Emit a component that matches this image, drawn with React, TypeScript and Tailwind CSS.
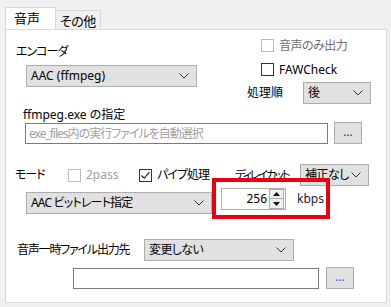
import React from 'react';

// Windows-style form controls
function Chevron() {
  return (
    <svg width="10" height="6" viewBox="0 0 10 6" className="shrink-0">
      <path d="M0.5 0.5 L5 5 L9.5 0.5" fill="none" stroke="#333" strokeWidth="1" />
    </svg>
  );
}

function Combo({ text, className }: { text: string; className: string }) {
  return (
    <div
      className={`flex items-center justify-between bg-[#e1e1e1] border border-[#adadad] pl-[4px] pr-[7px] ${className}`}
    >
      <span className="whitespace-nowrap">{text}</span>
      <Chevron />
    </div>
  );
}

function Check({
  label,
  checked = false,
  disabled = false,
  labelClass = 'text-black',
  className = '',
}: {
  label: string;
  checked?: boolean;
  disabled?: boolean;
  labelClass?: string;
  className?: string;
}) {
  return (
    <div className={`flex items-center h-[13px] ${className}`}>
      <div
        className={`w-[13px] h-[13px] bg-white border flex items-center justify-center shrink-0 ${
          disabled ? 'border-[#bcbcbc]' : 'border-[#333333]'
        }`}
      >
        {checked && (
          <svg width="11" height="11" viewBox="0 0 11 11">
            <path d="M1.5 5.5 L4.2 8.2 L9.5 2.2" fill="none" stroke="#222" strokeWidth="1.2" />
          </svg>
        )}
      </div>
      <span className={`ml-[5px] whitespace-nowrap ${labelClass}`}>{label}</span>
    </div>
  );
}

function BrowseButton({ dotClass, className }: { dotClass: string; className: string }) {
  return (
    <div
      className={`w-[28px] h-[22px] bg-[#e1e1e1] border border-[#adadad] flex items-center justify-center ${className}`}
    >
      <span className={`leading-none pb-[2px] ${dotClass}`}>...</span>
    </div>
  );
}

function Spin() {
  return (
    <div className="flex flex-col w-[15px] h-[20px] mr-[1px]">
      <div className="h-[10px] border border-[#adadad] bg-[#f0f0f0] flex items-center justify-center">
        <svg width="7" height="4" viewBox="0 0 7 4">
          <path d="M0 4 L3.5 0 L7 4 Z" fill="#111" />
        </svg>
      </div>
      <div className="h-[10px] border border-t-0 border-[#adadad] bg-[#f0f0f0] flex items-center justify-center">
        <svg width="7" height="4" viewBox="0 0 7 4">
          <path d="M0 0 L3.5 4 L7 0 Z" fill="#111" />
        </svg>
      </div>
    </div>
  );
}

export default function App() {
  return (
    <div className="w-[391px] h-[307px] bg-[#f0f0f0] pt-[8px] pl-[5px] text-[12px] text-black font-['Noto_Sans','Noto_Sans_CJK_JP',sans-serif] [font-feature-settings:'palt'_1] leading-[16px] overflow-hidden">
      {/* Tabs */}
      <div className="flex items-end h-[21px]">
        <div className="relative z-10 w-[51px] h-[22px] bg-white border border-b-0 border-[#d9d9d9] pl-[8px] pt-[2px] text-[13px]">
          音声
        </div>
        <div className="w-[45px] h-[19px] bg-[#f0f0f0] border border-l-0 border-b-0 border-[#d9d9d9] pl-[4px] pt-[1px] text-[13px] leading-[18px] tracking-[-0.5px]">
          その他
        </div>
      </div>

      {/* Panel */}
      <div className="relative w-[382px] h-[274px] bg-white border border-[#d9d9d9]">
        {/* Encoder / options */}
        <div className="flex h-[75px]">
          <div className="w-[200px]">
            <div className="pl-[10px] mt-[14px] h-[16px] tracking-[-1px]">エンコーダ</div>
            <Combo text="AAC (ffmpeg)" className="ml-[20px] mt-[5px] w-[171px] h-[22px]" />
          </div>
          <div className="flex flex-col">
            <Check label="音声のみ出力" disabled labelClass="text-[#6d6d6d] tracking-[-0.5px]" className="ml-[55px] mt-[9px]" />
            <Check label="FAWCheck" className="ml-[55px] mt-[11px]" />
            <div className="flex items-center h-[22px] mt-[6px] ml-[41px]">
              <span className="w-[56px]">処理順</span>
              <Combo text="後" className="w-[68px] h-[22px]" />
            </div>
          </div>
        </div>

        {/* ffmpeg.exe */}
        <div className="pl-[17px] mt-[2px] h-[16px]">ffmpeg.exe の指定</div>
        <div className="flex items-start h-[21px]">
          <div className="ml-[19px] w-[303px] h-[21px] border border-[#7a7a7a] pl-[3px] flex items-center text-[#a0a0a0] tracking-[-1px] whitespace-nowrap">
            exe_files内の実行ファイルを自動選択
          </div>
          <BrowseButton dotClass="text-[#444]" className="ml-[6px] -mt-[1px]" />
        </div>

        {/* Mode row */}
        <div className="flex items-center h-[22px] mt-[20px]">
          <span className="pl-[9px] w-[62px] tracking-[-1px]">モード</span>
          <Check label="2pass" disabled labelClass="text-[#a0a0a0]" className="w-[71px]" />
          <Check label="パイプ処理" checked labelClass="tracking-[-1px]" className="w-[96px]" />
          <span className="w-[65px] whitespace-nowrap text-[11.5px] tracking-[-2px]">ディレイカット</span>
          <Combo text="補正なし" className="w-[69px] h-[22px] tracking-[-0.5px]" />
        </div>

        {/* Bitrate row */}
        <div className="flex items-start h-[26px] mt-[2px]">
          <Combo text="AAC ビットレート指定" className="ml-[20px] mt-[4px] w-[186px] h-[22px] tracking-[-0.8px]" />
          <div className="ml-[9px] w-[65px] h-[22px] border border-[#adadad] bg-white flex items-center justify-end">
            <span className="mr-[2px]">256</span>
            <Spin />
          </div>
          <span className="ml-[11px] mt-[3px] text-[#1a1a3a]">kbps</span>
        </div>

        {/* Red annotation frame */}
        <div className="absolute left-[206px] top-[148px] w-[118px] h-[41px] border-4 border-[#e60012]" />

        {/* Temp output */}
        <div className="flex items-center h-[22px] mt-[25px]">
          <span className="pl-[11px] w-[138px] whitespace-nowrap tracking-[-1.2px]">音声一時ファイル出力先</span>
          <Combo text="変更しない" className="w-[150px] h-[22px] tracking-[-0.6px]" />
        </div>
        <div className="flex items-start h-[22px] mt-[6px]">
          <div className="ml-[67px] mt-[1px] w-[246px] h-[21px] border border-[#7a7a7a]" />
          <BrowseButton dotClass="text-[#0066cc]" className="ml-[7px]" />
        </div>
      </div>
    </div>
  );
}
